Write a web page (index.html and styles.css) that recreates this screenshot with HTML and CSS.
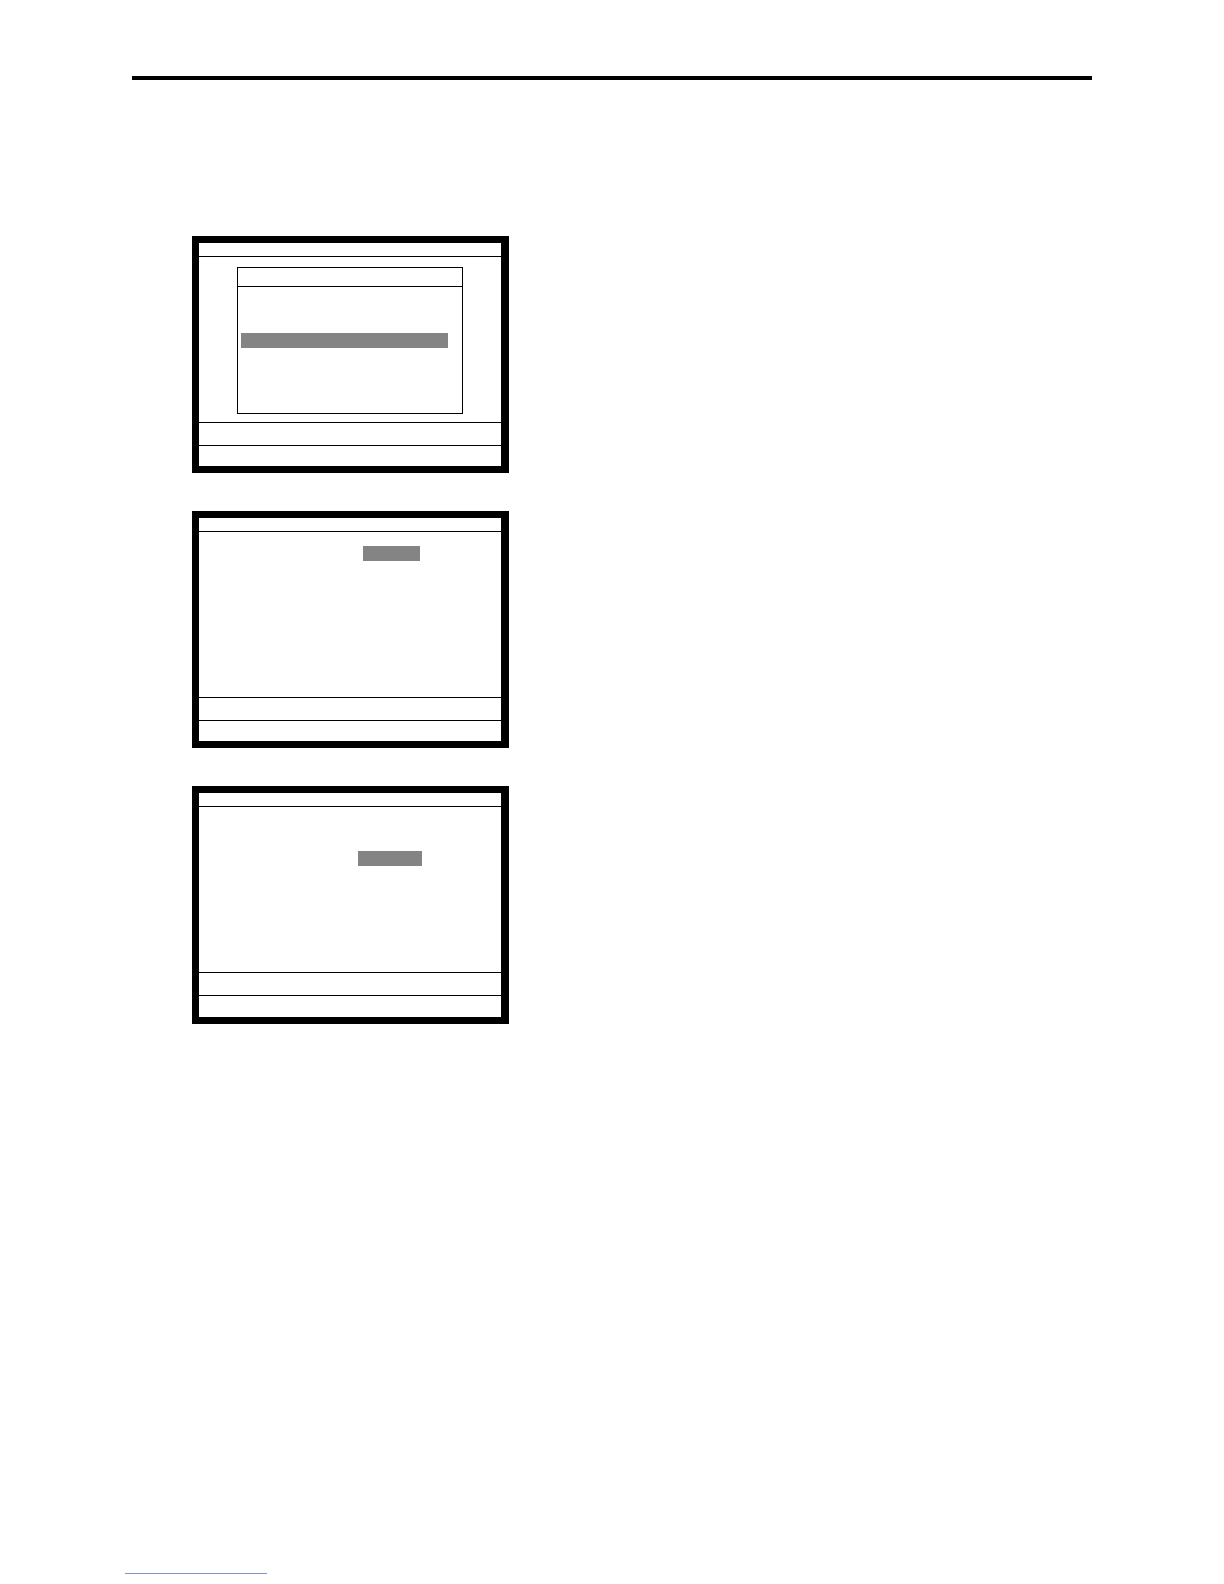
FILE: index.html
```html
<!DOCTYPE html>
<html lang="en">
<head>
<meta charset="utf-8">
<title>Screens</title>
<link rel="stylesheet" href="styles.css">
</head>
<body>
<div class="page">
  <div class="rule"></div>
  <div class="screens">
    <div class="screen">
      <div class="screen-header"></div>
      <div class="screen-body">
        <div class="dialog">
          <div class="dialog-header"></div>
          <div class="dialog-body">
            <div class="hl hl-list"></div>
          </div>
        </div>
      </div>
      <div class="screen-footer"></div>
      <div class="screen-footer last"></div>
    </div>
    <div class="screen">
      <div class="screen-header"></div>
      <div class="screen-body">
        <div class="hl hl-field-a"></div>
      </div>
      <div class="screen-footer"></div>
      <div class="screen-footer last"></div>
    </div>
    <div class="screen tall">
      <div class="screen-header"></div>
      <div class="screen-body">
        <div class="hl hl-field-b"></div>
      </div>
      <div class="screen-footer"></div>
      <div class="screen-footer last"></div>
    </div>
  </div>
  <div class="footnote-rule"></div>
</div>
</body>
</html>
```

FILE: styles.css
```css
html, body {
  margin: 0;
  padding: 0;
  background: #fff;
  font-family: "Liberation Sans", Arial, sans-serif;
}

.page {
  width: 1224px;
  height: 1584px;
  padding-top: 76px;
  box-sizing: border-box;
}

.rule {
  margin-left: 132px;
  width: 960px;
  height: 4px;
  background: #000;
}

.screens {
  margin-top: 156px;
  margin-left: 192px;
  display: flex;
  flex-direction: column;
  gap: 38px;
}

.screen {
  width: 302px;
  height: 223px;
  border: 7px solid #000;
  border-right-width: 8px;
  display: flex;
  flex-direction: column;
  box-sizing: content-box;
}

.screen.tall {
  height: 224px;
}

.screen-header {
  height: 13px;
  border-bottom: 1px solid #000;
  flex: none;
}

.screen-body {
  height: 165px;
  border-bottom: 1px solid #000;
  flex: none;
  overflow: hidden;
}

.screen-footer {
  height: 22px;
  border-bottom: 1px solid #000;
  flex: none;
}

.screen-footer.last {
  flex: 1;
  border-bottom: none;
}

.dialog {
  margin-top: 10px;
  margin-left: 38px;
  width: 224px;
  height: 145px;
  border: 1px solid #000;
  display: flex;
  flex-direction: column;
}

.dialog-header {
  height: 18px;
  border-bottom: 1px solid #000;
  flex: none;
}

.dialog-body {
  flex: 1;
  padding-top: 46px;
  padding-left: 3px;
}

.hl {
  background: #848484;
  height: 15px;
}

.hl-list {
  width: 207px;
}

.hl-field-a {
  width: 57px;
  margin-top: 14px;
  margin-left: 164px;
}

.hl-field-b {
  width: 64px;
  margin-top: 44px;
  margin-left: 159px;
}

.footnote-rule {
  margin-top: 549px;
  margin-left: 125px;
  width: 142px;
  height: 1px;
  background: #7f93cc;
}
```
